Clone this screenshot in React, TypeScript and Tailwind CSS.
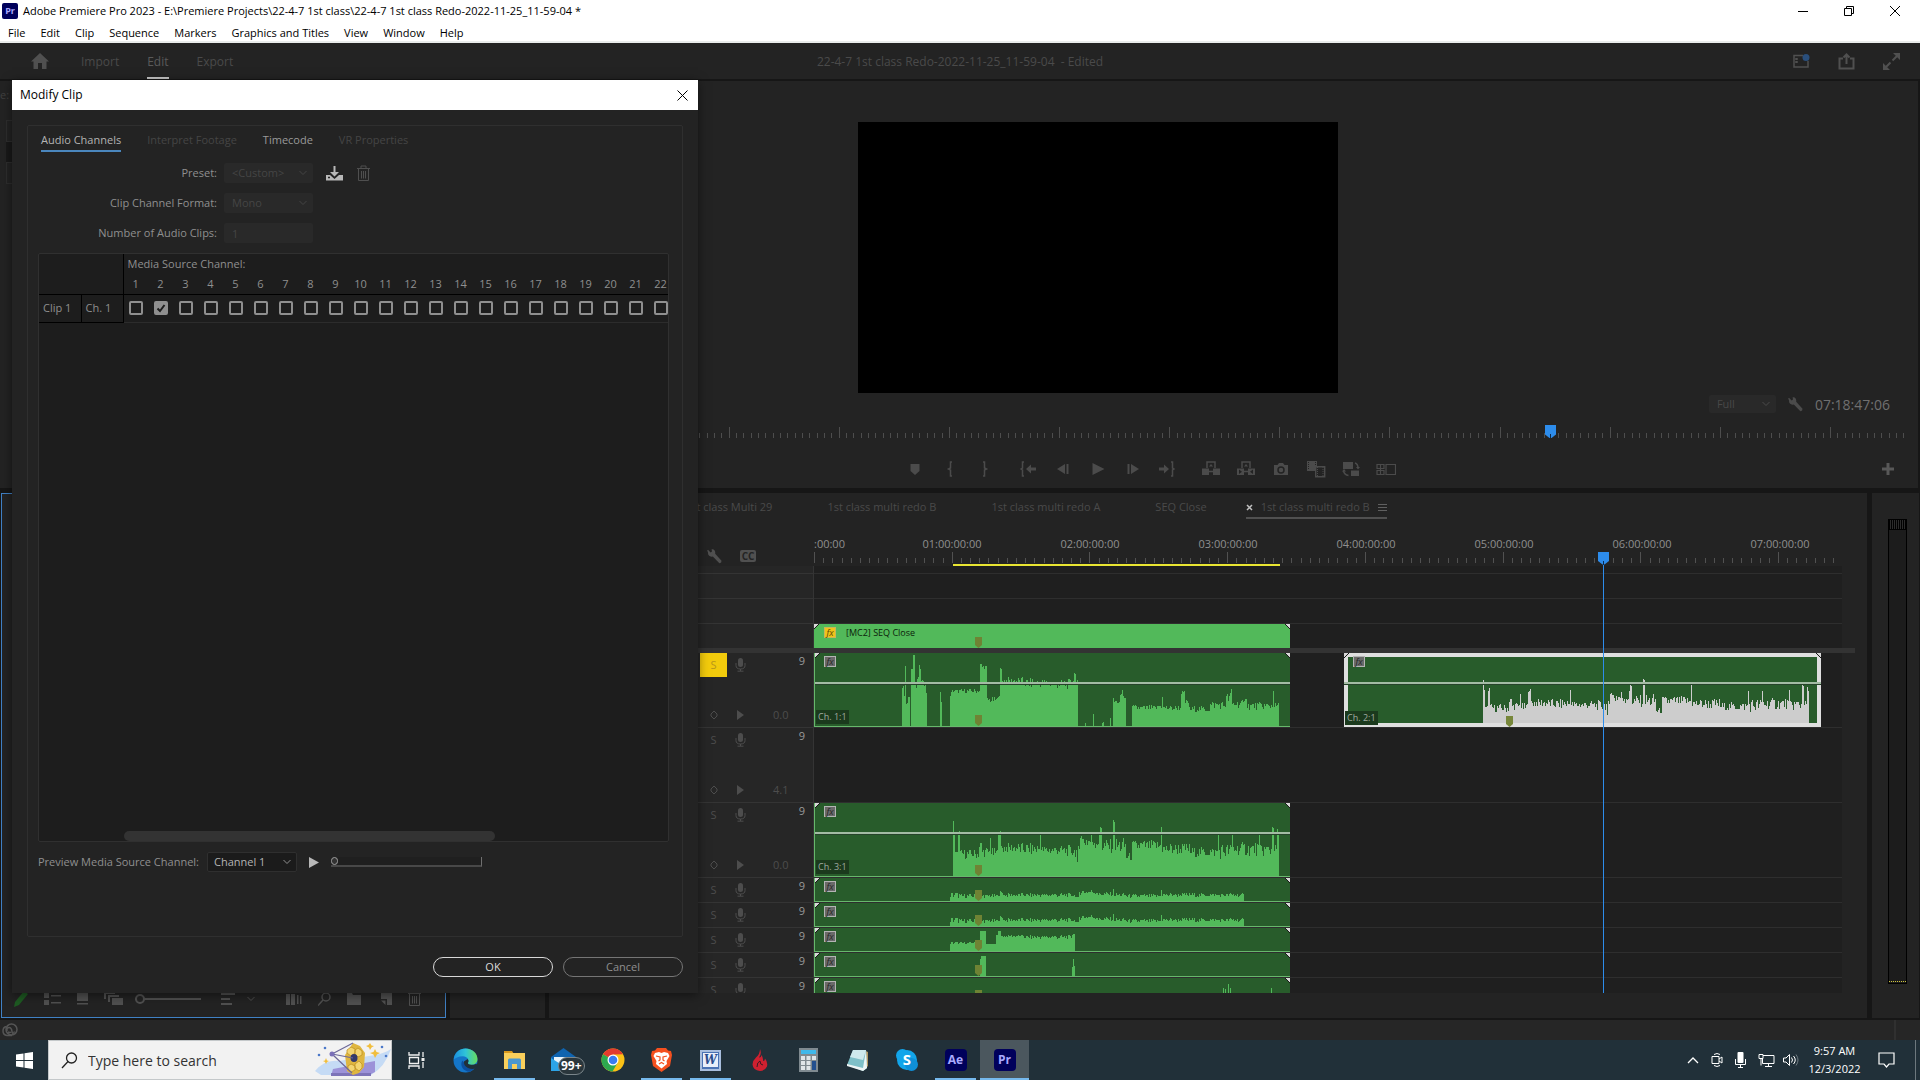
import { ReactNode, useState } from 'react';
import { clsx } from 'clsx';

const menus = ['File', 'Edit', 'Clip', 'Sequence', 'Markers', 'Graphics and Titles', 'View', 'Window', 'Help'];
const channels = Array.from({ length: 22 }, (_, i) => i + 1);

// [from, to, height, jitter], in pixels from the clip's left edge
type Segment = [number, number, number, number];

const cameraWave: Segment[] = [
    [88, 90, 38, 2], [90, 91, 30, 0], [91, 92, 60, 0], [92, 94, 22, 3], [94, 96, 28, 2],
    [97, 99, 57, 0], [99, 101, 71, 1], [101, 103, 41, 3], [103, 105, 49, 3], [105, 107, 58, 4],
    [107, 109, 44, 4], [109, 112, 42, 3], [112, 113, 33, 0], [126, 127, 34, 0], [127, 128, 24, 0],
    [136, 138, 32, 3], [138, 166, 35, 2], [166, 168, 61, 3], [168, 173, 59, 2], [173, 184, 26, 3],
    [184, 186, 33, 4], [186, 188, 56, 2], [188, 210, 45, 4], [210, 238, 43, 5], [238, 258, 42, 5],
    [258, 260, 46, 3], [260, 262, 53, 1], [262, 264, 44, 2], [271, 272, 3, 0], [279, 280, 12, 0],
    [288, 290, 4, 1], [296, 297, 8, 0], [299, 302, 26, 3], [302, 306, 23, 3], [306, 309, 34, 5],
    [309, 312, 28, 2], [318, 344, 18, 3], [344, 348, 20, 3], [348, 349, 29, 0], [349, 367, 18, 3],
    [367, 371, 33, 2], [371, 375, 24, 3], [375, 396, 17, 3], [396, 412, 21, 4], [412, 413, 30, 0],
    [413, 417, 28, 6], [417, 418, 37, 0], [418, 431, 22, 4], [431, 433, 29, 2], [433, 459, 20, 4],
    [459, 460, 35, 0], [460, 465, 20, 3],
];

const voiceWave: Segment[] = [
    [139, 140, 55, 0], [140, 141, 43, 0], [141, 144, 22, 3], [144, 146, 44, 3], [146, 165, 22, 5],
    [165, 168, 30, 6], [168, 176, 24, 5], [176, 177, 38, 0], [177, 184, 23, 5], [184, 187, 43, 2],
    [187, 205, 28, 5], [205, 226, 27, 6], [226, 227, 43, 0], [227, 250, 26, 5], [250, 263, 25, 6],
    [263, 264, 12, 2], [264, 266, 27, 4], [266, 268, 42, 4], [268, 286, 35, 9], [286, 288, 49, 3], [288, 299, 30, 7],
    [299, 301, 55, 1], [301, 312, 30, 9], [312, 318, 19, 4], [318, 347, 30, 6], [347, 348, 49, 0],
    [348, 376, 27, 6], [376, 404, 24, 5], [404, 405, 42, 0], [405, 418, 25, 8], [418, 419, 42, 0],
    [419, 445, 27, 7], [445, 446, 43, 0], [446, 458, 26, 7], [458, 460, 49, 2], [460, 463, 27, 4],
    [463, 464, 47, 0], [464, 465, 42, 0],
];

const roomWave: Segment[] = [
    [136, 146, 6, 3], [146, 184, 5, 2], [184, 190, 8, 3], [190, 262, 6, 2], [262, 265, 4, 0],
    [265, 284, 9, 3], [284, 299, 7, 2], [299, 300, 12, 0], [300, 312, 6, 2], [312, 347, 5, 2],
    [347, 348, 11, 0], [348, 430, 6, 2],
];

const mixWave: Segment[] = [
    [136, 166, 8, 1], [166, 168, 20, 1], [168, 172, 20, 0], [172, 182, 7, 0], [182, 184, 16, 0],
    [184, 187, 20, 0], [187, 210, 15, 1], [210, 258, 14, 2], [258, 261, 17, 1],
];

const stingWave: Segment[] = [[166, 167, 17, 0], [167, 172, 20, 0], [258, 259, 9, 0], [259, 260, 17, 0], [260, 261, 10, 0]];
const tailWave: Segment[] = [[409, 410, 13, 0], [411, 412, 12, 0], [414, 415, 17, 0], [416, 417, 13, 0], [457, 458, 13, 0]];

function wavePath(segments: Segment[], height: number, scale = 1) {
    let d = '';
    segments.forEach(([from, to, level, jitter]) => {
        for (let x = from; x < to; x++) {
            const n = Math.sin(x * 12.9898) * 43758.5453;
            const r = n - Math.floor(n);
            const h = Math.max(1, Math.round((level + (r - 0.5) * jitter * 2) * scale));
            d += `M${x} ${height}v-${h}h1v${h}z`;
        }
    });
    return d;
}

function tickPath(start: number, step: number, count: number, bottom: number, major: number) {
    let d = '';
    for (let i = 0; i < count; i++) {
        const x = Math.round(start + i * step) + 0.5;
        d += `M${x} ${bottom}v-${(i - major) % 15 === 0 ? 11 : 5}`;
    }
    return d;
}

function Chevron({ className }: { className?: string }) {
    return (
        <svg className={clsx('pointer-events-none', className)} width="8" height="6" viewBox="0 0 8 6" fill="none" stroke="currentColor">
            <path d="M0.5 1L4 4.5L7.5 1" />
        </svg>
    );
}

function Wrench() {
    return (
        <svg width="15" height="15" viewBox="0 0 15 15" fill="currentColor">
            <path d="M1 0.8L3.6 3.4L5 2.5L4.6 0.3C7 0 8.8 2 8.2 4.8L14.5 11.8Q14.8 14.3 12.4 14.2L5.8 7.4C3.4 8.3 0.6 6.6 1 3.6L0.2 1.6Z" />
        </svg>
    );
}

function Mic() {
    return (
        <svg width="11" height="14" viewBox="0 0 11 14" fill="currentColor">
            <rect x="3" y="0" width="5" height="9" rx="2.5" />
            <path d="M1 5v2.5Q1 11 5.5 11T10 7.5V5M5.5 11v2M2.5 13.2h6" fill="none" stroke="currentColor" />
        </svg>
    );
}

function Trash() {
    return (
        <svg width="13" height="17" viewBox="0 0 13 17" fill="none" stroke="currentColor">
            <path d="M0 3.5h13M4 3V1h5v2M1.5 3.5v12h10v-12M4.5 6v7.5M6.5 6v7.5M8.5 6v7.5" />
        </svg>
    );
}

function TitleBar() {
    return (
        <header className="bg-white text-black text-[11px] border-b-2 border-[#e9eceb]">
            <div className="flex h-[22px] items-center pl-0.5">
                <span className="flex h-4 w-4 items-center justify-center rounded-xs bg-[#00005b] text-[9px] font-bold text-[#a9a9ff]">Pr</span>
                <h1 className="ml-[5px] flex-1 whitespace-nowrap">
                    Adobe Premiere Pro 2023 - E:\Premiere Projects\22-4-7 1st class\22-4-7 1st class Redo-2022-11-25_11-59-04 *
                </h1>
                <div className="flex items-center gap-9 pr-5">
                    <button aria-label="Minimize"><svg width="10" height="10" stroke="black"><path d="M0 5.5h10" /></svg></button>
                    <button aria-label="Restore"><svg width="10" height="10" stroke="black" fill="none"><path d="M0.5 2.5h7v7h-7zM2.5 2.5v-2h7v7h-2" /></svg></button>
                    <button aria-label="Close"><svg width="10" height="10" stroke="black"><path d="M0 0L10 10M10 0L0 10" /></svg></button>
                </div>
            </div>
            <nav className="flex h-[19px] items-start gap-[15px] pl-2 leading-[21px]">
                {menus.map(m => <button key={m} className="whitespace-nowrap">{m}</button>)}
            </nav>
        </header>
    );
}

function WorkspaceBar() {
    return (
        <div className="flex h-9 shrink-0 items-center bg-[#232323] text-[12px] text-[#4a4a4a]">
            <div className="flex h-full flex-1 items-center gap-7">
                <button aria-label="Home" className="ml-[31px] mr-1">
                    <svg width="18" height="16" viewBox="0 0 18 16" fill="#505050"><path d="M9 0L18 8.5H15.5V16H11V10H7V16H2.5V8.5H0Z" /></svg>
                </button>
                <button className="h-full pt-0.5">Import</button>
                <button className="h-full border-b-2 border-[#c8c8c8] pt-1 text-[#5a5a5a]">Edit</button>
                <button className="h-full pt-0.5">Export</button>
            </div>
            <p className="pt-0.5">22-4-7 1st class Redo-2022-11-25_11-59-04&nbsp; - Edited</p>
            <div className="flex flex-1 items-center justify-end gap-7 text-[#505050]">
                <button aria-label="Workspaces">
                    <svg width="17" height="14" fill="none" stroke="currentColor" strokeWidth="1.5"><path d="M10 1.5H1v11.500h14V7" /><path d="M3.500 4v6" strokeWidth="2.500" strokeDasharray="2 1" /><circle cx="13" cy="3.500" r="3.500" fill="#2a4f7c" stroke="none" /></svg>
                </button>
                <button aria-label="Quick export">
                    <svg width="17" height="17" fill="none" stroke="currentColor" strokeWidth="2"><path d="M5 5.500H1.500v10h14v-10H12M8.500 11V2M5.500 4.500L8.500 1.500L11.500 4.500" /></svg>
                </button>
                <button aria-label="Full screen" className="mr-5">
                    <svg width="17" height="17" fill="currentColor"><path d="M17 0v7L10 0zM0 17v-7l7 7z" /><path d="M14 3L9.500 7.500M7.500 9.500L3 14" stroke="currentColor" strokeWidth="2" /></svg>
                </button>
            </div>
        </div>
    );
}

function Cell({ label, children }: { label: string; children: ReactNode }) {
    return (
        <button aria-label={label} className="flex w-[35px] justify-center">
            <svg width="20" height="18" viewBox="0 0 20 18" fill="currentColor">{children}</svg>
        </button>
    );
}

function Transport() {
    return (
        <div className="flex h-9 items-center text-[#4b4b4b]">
            <div className="flex flex-1 justify-end">
                <Cell label="Add marker"><path d="M5.500 4h9v7l-4.500 4-4.500-4z" /></Cell>
                <Cell label="Mark in"><path d="M12 2h-1.500v6L8.500 9l2 1v6H12" fill="none" stroke="currentColor" strokeWidth="1.500" /></Cell>
                <Cell label="Mark out"><path d="M8 2h1.500v6l2 1-2 1v6H8" fill="none" stroke="currentColor" strokeWidth="1.500" /></Cell>
                <span className="w-2" />
                <Cell label="Go to in"><path d="M6 2H4.500v6L3 9l1.500 1v6H6" fill="none" stroke="currentColor" strokeWidth="1.500" /><path d="M8 9l5-4.500v3h5v3h-5v3z" /></Cell>
                <Cell label="Step back"><path d="M4 9l8-5v10zM13.500 4h2v10h-2z" /></Cell>
            </div>
            <Cell label="Play"><path d="M4.500 3l12 6-12 6z" /></Cell>
            <div className="flex flex-1">
                <Cell label="Step forward"><path d="M16 9L8 4v10zM4.500 4h2v10h-2z" /></Cell>
                <Cell label="Go to out"><path d="M13 2h1.500v6L16 9l-1.500 1v6H13" fill="none" stroke="currentColor" strokeWidth="1.500" /><path d="M11 9L6 4.500v3H1v3h5v3z" /></Cell>
                <span className="w-2" />
                <Cell label="Lift"><path d="M1 8.500h7V15H1zM12 8.500h7V15h-7zM8 6.500l2-2.500 2 2.500z" /><path d="M6 8V2h8v6M7 11.500h6" fill="none" stroke="currentColor" strokeWidth="1.500" /></Cell>
                <Cell label="Extract"><path d="M1 8.500h7V15H1zM12 8.500h7V15h-7zM8 6.500l2-2.500 2 2.500z" /><path d="M6 8V2h8v6M7 11.500h6" fill="none" stroke="currentColor" strokeWidth="1.500" /><path d="M3 9.500l3 2.300-3 2.200zM17 9.500l-3 2.300 3 2.200z" fill="#232323" /></Cell>
                <Cell label="Export frame"><path d="M3 5h3.500l1.500-2h4l1.500 2H17v10H3z" /><circle cx="10" cy="10" r="3" fill="none" stroke="#232323" strokeWidth="1.500" /></Cell>
                <Cell label="Multi-camera"><path d="M1 1h10v10H1z" /><path d="M2.500 2v8M9.500 2v8" stroke="#232323" strokeDasharray="1 1" /><path d="M9.700 6.700h9v10h-9z" fill="#232323" stroke="currentColor" strokeWidth="1.400" /><path d="M11.500 7v10M17 7v10" stroke="currentColor" strokeDasharray="1 1" /></Cell>
                <Cell label="Toggle proxies"><path d="M2 2h10v7H2zM10 10.500h8V16h-8z" /><path d="M14 3q3 1 3 5M2.500 11q1 4 5 4.500" fill="none" stroke="currentColor" strokeWidth="1.500" /><path d="M15 7h4l-2 2.500zM1 11.500h4L3 9z" /></Cell>
                <Cell label="Comparison view"><path d="M1 4.500h7v4H1zM1 10.500h7v4H1zM4.500 4.500v10M10 4.500h9.500v10H10z" fill="none" stroke="currentColor" strokeWidth="1.200" /></Cell>
                <button aria-label="Button editor" className="ml-auto mr-6">
                    <svg width="12" height="12" fill="#585858"><path d="M4.500 0h3v4.500H12v3H7.500V12h-3V7.500H0v-3h4.500z" /></svg>
                </button>
            </div>
        </div>
    );
}

function ProgramMonitor() {
    return (
        <section className="flex min-w-0 flex-1 flex-col bg-[#232323]">
            <div className="mx-auto mt-[41px] h-[271px] w-[480px] bg-black" />
            <div className="mt-0.5 flex h-[18px] items-center justify-end pr-7 text-[#4b4b4b]">
                <div className="relative flex">
                    <select disabled aria-label="Playback resolution" className="h-[18px] w-[67px] appearance-none rounded-xs bg-[#292929] pl-2 text-[11px] text-[#484848] opacity-100">
                        <option>Full</option>
                    </select>
                    <Chevron className="absolute right-1.5 top-1.5" />
                </div>
                <button aria-label="Settings" className="ml-3"><Wrench /></button>
                <span className="ml-3 text-[14px] text-[#707070]">07:18:47:06</span>
            </div>
            <div className="relative mt-3 h-[14px]">
                <svg className="w-full" height="14" stroke="#4d4d4d" shapeRendering="crispEdges">
                    <path d={tickPath(11, 7.343, 221, 13, 0)} />
                </svg>
                <svg className="absolute left-[1268px] top-0" width="11" height="13"><path d="M0 0h11v9.500L6.500 13h-2L0 9.500z" fill="#2d8ceb" /><path d="M5.500 9v4" stroke="#0a2a4d" /></svg>
            </div>
            <div className="mt-3"><Transport /></div>
        </section>
    );
}

function Marker({ className, fill = '#6f8334' }: { className: string; fill?: string }) {
    return (
        <svg className={clsx('absolute', className)} width="7" height="11"><path d="M0 0h7v8L3.500 11L0 8z" fill={fill} /></svg>
    );
}

function Badge({ on }: { on?: boolean }) {
    return (
        <span className={clsx(
            'absolute top-[3px] flex h-[11px] w-3 items-center justify-center border text-[9px] leading-none italic',
            on ? 'left-2.5 border-[#c9b558] bg-[#f0c419] text-[#5c4a05]' : 'left-[9px] border-[#b4b4b4] bg-[#6a6a6a] text-[#262626]',
        )}>fx</span>
    );
}

function Clip({ wave, tall, selected, channel, marker = 'left-[160px]', scale = 1 }: {
    wave: Segment[]; tall?: boolean; selected?: boolean; channel?: string; marker?: string; scale?: number;
}) {
    const height = tall ? 74 : 24;
    return (
        <div className={clsx('relative h-full shrink-0 overflow-hidden bg-[#285c2b]', selected ? 'w-[477px]' : 'w-[476px] border-b border-l border-[#67b86c]')}>
            <svg className={clsx('absolute bottom-0', selected ? 'left-0' : '-left-px')} width="477" height={height} shapeRendering="crispEdges">
                <path d={wavePath(wave, height, scale)} fill={selected ? '#cdcdcd' : '#52b95a'} />
            </svg>
            {selected && <div className="absolute inset-0 border-4 border-[#dfdfdf]" />}
            {tall && <div className="absolute inset-x-0 top-[29px] h-[3px] border-b border-[#26432a] bg-[#a3bba4]" />}
            <svg className="absolute left-0 top-0" width="5" height="5"><path d="M0 0h5L0 5z" fill="#d8d8d8" /><path d="M5 0L0 5" stroke="#1a1a1a" /></svg>
            <svg className="absolute right-0 top-0" width="5" height="5"><path d="M0 0h5v5z" fill="#d8d8d8" /><path d="M0 0L5 5" stroke="#1a1a1a" /></svg>
            <Badge />
            {channel && <span className="absolute bottom-[2px] left-px bg-[#1b3a1d] px-0.5 text-[9px] leading-[14px] text-[#a0aaa0]">{channel}</span>}
            <Marker className={clsx('bottom-0', marker)} fill={selected ? '#77873a' : '#6f8334'} />
        </div>
    );
}

function AudioTrack({ solo, level, children }: { solo?: boolean; level?: string; children?: ReactNode }) {
    return (
        <div className={clsx('flex shrink-0', level ? 'h-[75px]' : 'h-[25px]')}>
            <div className="flex w-[265px] flex-col justify-between border-b border-r border-[#343434] bg-[#262626] pl-[151px] text-[11px] text-[#4d4d4d]">
                <div className="flex h-6 items-center">
                    <button aria-label="Solo" className={clsx('h-full w-[27px]', solo && 'bg-[#f2cb0c] text-[#b8961a]')}>S</button>
                    <button aria-label="Voice-over record" className="flex w-[26px] justify-center"><Mic /></button>
                    <span className="ml-auto mr-2 self-start leading-4 text-[#9a9a9a]">9</span>
                </div>
                {level && (
                    <div className="flex h-6 items-center">
                        <button aria-label="Add keyframe" className="flex w-[27px] justify-center">
                            <svg width="8" height="10" fill="none" stroke="currentColor"><path d="M4 1L7 4v2L4 9L1 6v-2z" /></svg>
                        </button>
                        <button aria-label="Next keyframe" className="flex w-[26px] justify-center">
                            <svg width="7" height="10" fill="currentColor"><path d="M0 0L7 5L0 10z" /></svg>
                        </button>
                        <span className="ml-5">{level}</span>
                    </div>
                )}
            </div>
            <div className="mr-[25px] flex min-w-0 flex-1 border-b border-[#2e2e2e] bg-[#1f1f1f]">{children}</div>
        </div>
    );
}

const sequenceTabs = ['1st class Multi 29', '1st class multi redo B', '1st class multi redo A', 'SEQ Close'];

function Timeline() {
    return (
        <section className="relative flex min-w-0 flex-1 flex-col overflow-hidden bg-[#232323]">
            <div className="flex h-[26px] gap-[55px] whitespace-nowrap pl-[136px] text-[11px] leading-7 text-[#4a4a4a]">
                {sequenceTabs.map(t => <button key={t}>{t}</button>)}
                <button className="-ml-4 flex items-center gap-2 border-b-2 border-[#505050] pt-1">
                    <svg width="7" height="7" stroke="#c0c0c0" strokeWidth="1.500"><path d="M1 1L6 6M6 1L1 6" /></svg>
                    1st class multi redo B
                    <svg width="9" height="9" stroke="#606060"><path d="M0 1.500h9M0 4.500h9M0 7.500h9" /></svg>
                </button>
            </div>
            <div className="flex h-[47px] shrink-0">
                <div className="flex w-[265px] shrink-0 items-end gap-[18px] pb-0.5 pl-[158px] text-[#505050]">
                    <button aria-label="Timeline settings"><Wrench /></button>
                    <button aria-label="Captions" className="mb-0.5 flex h-3 w-4 items-center justify-center rounded-xs bg-[#505050] text-[10px] font-bold text-[#232323]">CC</button>
                </div>
                <div className="relative mr-[25px] min-w-0 flex-1 text-[11px] text-[#8f8f8f]">
                    <div className="flex pt-[17px] leading-4">
                        <span className="w-[69px] shrink-0">:00:00</span>
                        {[1, 2, 3, 4, 5, 6, 7].map(h => (
                            <span key={h} className="w-[138px] shrink-0 text-center">0{h}:00:00:00</span>
                        ))}
                    </div>
                    <svg className="absolute bottom-[3px] left-0 w-full" height="12" stroke="#515151" shapeRendering="crispEdges">
                        <path d={tickPath(0, 9.182, 113, 12, 0)} />
                    </svg>
                    <div className="absolute bottom-0 left-[139px] h-0.5 w-[327px] bg-[#e8e532]" />
                </div>
            </div>
            <div className="flex h-[427px] shrink-0 flex-col overflow-hidden">
                {['h-2', 'h-[25px]', 'h-[25px]'].map((h, i) => (
                    <div key={i} className={clsx('flex shrink-0', h)}>
                        <div className="w-[265px] border-b border-r border-[#343434] bg-[#262626]" />
                        <div className="mr-[25px] flex-1 border-b border-[#2e2e2e] bg-[#1f1f1f]" />
                    </div>
                ))}
                <div className="flex h-6 shrink-0">
                    <div className="w-[265px] border-r border-[#343434] bg-[#262626]" />
                    <div className="mr-[25px] flex flex-1 bg-[#1f1f1f]">
                        <div className="relative w-[476px] bg-[#52b95a]">
                            <svg className="absolute left-0 top-0" width="5" height="5"><path d="M0 0h5L0 5z" fill="#d8d8d8" /><path d="M5 0L0 5" stroke="#1a1a1a" /></svg>
                            <svg className="absolute right-0 top-0" width="5" height="5"><path d="M0 0h5v5z" fill="#d8d8d8" /><path d="M0 0L5 5" stroke="#1a1a1a" /></svg>
                            <Badge on />
                            <span className="block pl-8 text-[9px] leading-[18px] text-[#0c1c0a]">[MC2] SEQ Close</span>
                            <Marker className="bottom-0 left-[161px]" />
                        </div>
                    </div>
                </div>
                <div className="mr-3 h-[5px] shrink-0 bg-[#333333]" />
                <AudioTrack solo level="0.0">
                    <Clip wave={cameraWave} tall channel="Ch. 1:1" />
                    <div className="w-[54px] shrink-0" />
                    <Clip wave={voiceWave} tall selected channel="Ch. 2:1" marker="left-[162px]" scale={0.86} />
                </AudioTrack>
                <AudioTrack level="4.1" />
                <AudioTrack level="0.0"><Clip wave={voiceWave} tall channel="Ch. 3:1" /></AudioTrack>
                <AudioTrack><Clip wave={roomWave} /></AudioTrack>
                <AudioTrack><Clip wave={roomWave} /></AudioTrack>
                <AudioTrack><Clip wave={mixWave} /></AudioTrack>
                <AudioTrack><Clip wave={stingWave} /></AudioTrack>
                <AudioTrack><Clip wave={tailWave} /></AudioTrack>
            </div>
            {/* playhead */}
            <div className="absolute left-[1054px] top-[59px] h-[441px] w-px bg-[#2d8ceb]" />
            <svg className="absolute left-[1049px] top-[59px]" width="11" height="13"><path d="M0 0h11v9L6.500 12.500h-2L0 9z" fill="#2d8ceb" /><path d="M5.500 9v4" stroke="#0a2a4d" /></svg>
        </section>
    );
}

function ProjectPanel() {
    return (
        <section className="ml-px flex w-[445px] shrink-0 flex-col justify-end border border-[#4081c5] bg-[#232323]">
            <div className="flex h-[37px] items-center px-3 text-[#505050]">
                <svg width="14" height="16" fill="#1e5a22"><path d="M0 16l1-5L10 0l4 3L5 14z" /></svg>
                <svg className="ml-4" width="17" height="12" fill="currentColor"><path d="M0 0h5v5H0zM0 7h5v5H0zM7 2h10v1.500H7zM7 9h10v1.500H7z" /></svg>
                <svg className="ml-4" width="11" height="13" fill="currentColor"><path d="M0 0h11v9H0zM0 11h11v1.500H0z" /></svg>
                <svg className="ml-4" width="19" height="13" fill="currentColor"><path d="M0 0h11v2H2v5H0zM4 3h11v2H6v5H4zM8 6h11v7H8z" /></svg>
                <input aria-label="Thumbnail size" type="range" min="0" max="100" defaultValue="0" className="ml-3 h-0.5 w-[66px] appearance-none bg-[#505050] [&::-webkit-slider-thumb]:h-2.5 [&::-webkit-slider-thumb]:w-2.5 [&::-webkit-slider-thumb]:appearance-none [&::-webkit-slider-thumb]:rounded-full [&::-webkit-slider-thumb]:border-2 [&::-webkit-slider-thumb]:border-[#505050] [&::-webkit-slider-thumb]:bg-[#232323]" />
                <svg className="ml-5" width="14" height="14" fill="currentColor"><path d="M0 1h14v2H0zM0 6h9v2H0zM0 11h11v2H0z" /></svg>
                <Chevron className="ml-3" />
                <svg className="ml-auto" width="16" height="12" fill="currentColor"><path d="M0 1h4v11H0zM5 1h4v11H5zM11 2h1.500v9H11zM14 3h1.500v8H14z" /></svg>
                <svg className="ml-4" width="13" height="14" fill="none" stroke="currentColor" strokeWidth="1.500"><circle cx="8" cy="5" r="4" /><path d="M5 8L0 13.500" /></svg>
                <svg className="ml-4" width="14" height="12" fill="currentColor"><path d="M0 0h5l1 2h8v10H0z" /></svg>
                <svg className="ml-5" width="11" height="12" fill="currentColor"><path d="M0 0h11v12H6V6H0zM0 7.500h4.500V12z" /></svg>
                <span className="ml-4 mr-3"><Trash /></span>
            </div>
        </section>
    );
}

function AudioMeter() {
    return (
        <section className="flex w-[47px] shrink-0 flex-col bg-[#232323] pl-4 pt-[26px]">
            <div className="flex h-[465px] w-[19px] flex-col border border-black bg-[#1c1c1c]">
                <div className="h-2.5 border-b border-black bg-[repeating-linear-gradient(90deg,#000_0_1px,#2b2b2b_1px_2px)]" />
                <div className="mb-px mt-auto h-px bg-[repeating-linear-gradient(90deg,#cfc43a_0_1px,#222_1px_2px)]" />
            </div>
        </section>
    );
}

const fieldStyle = 'h-5 w-[89px] appearance-none rounded-xs bg-[#292929] pl-2 text-[11px] text-[#454545] opacity-100';

function ModifyClip() {
    const [checked, setChecked] = useState([2]);
    const toggle = (c: number) => setChecked(prev => prev.includes(c) ? prev.filter(n => n !== c) : [...prev, c]);

    return (
        <div role="dialog" aria-labelledby="modify-title" className="absolute bottom-[87px] left-3 top-20 flex w-[686px] flex-col bg-[#232323] text-[11px] text-[#8f8f8f] shadow-[0_2px_10px_rgba(0,0,0,0.5)]">
            <div className="flex h-[30px] shrink-0 items-center justify-between bg-white pl-2 pr-2.5 text-[12px] text-black">
                <h2 id="modify-title">Modify Clip</h2>
                <button aria-label="Close dialog"><svg width="11" height="11" stroke="black"><path d="M0.500 0.500L10.500 10.500M10.500 0.500L0.500 10.500" /></svg></button>
            </div>
            <div className="mx-[15px] mt-[15px] flex flex-1 flex-col rounded-xs border border-[#2f2f2f] px-2.5">
                <div role="tablist" className="flex h-[26px] gap-[26px] pl-[3px]">
                    <button role="tab" aria-selected="true" className="border-b-2 border-[#4a86bd] pt-1 text-[#b4b4b4]">Audio Channels</button>
                    <button role="tab" disabled className="pt-0.5 text-[#454545]">Interpret Footage</button>
                    <button role="tab" className="pt-0.5 text-[#9a9a9a]">Timecode</button>
                    <button role="tab" disabled className="pt-0.5 text-[#454545]">VR Properties</button>
                </div>
                <div className="mt-[11px] grid grid-cols-[179px_89px_auto] items-center gap-x-[7px] gap-y-2.5">
                    <label htmlFor="preset" className="text-right">Preset:</label>
                    <div className="relative flex">
                        <select id="preset" disabled className={fieldStyle}><option>&lt;Custom&gt;</option></select>
                        <Chevron className="absolute right-1.5 top-[7px] text-[#454545]" />
                    </div>
                    <div className="flex items-center gap-3.5 pl-1.5">
                        <button aria-label="Save preset">
                            <svg width="17" height="15" fill="#b8b8b8"><path d="M7.500 0h2v6H13l-4.500 4.500L4 6h3.500zM0 9h4l4.500 4L13 9h4v5.500H0z" /><path d="M2 11.500h2" stroke="#232323" strokeWidth="1.500" /></svg>
                        </button>
                        <button aria-label="Delete preset" disabled className="text-[#4f4f4f]"><Trash /></button>
                    </div>
                    <label htmlFor="format" className="text-right">Clip Channel Format:</label>
                    <div className="relative flex">
                        <select id="format" disabled className={fieldStyle}><option>Mono</option></select>
                        <Chevron className="absolute right-1.5 top-[7px] text-[#454545]" />
                    </div>
                    <span />
                    <label htmlFor="clips" className="text-right">Number of Audio Clips:</label>
                    <input id="clips" disabled defaultValue="1" className={fieldStyle} />
                </div>
                <div className="mt-2.5 flex h-[589px] w-[631px] flex-col overflow-hidden rounded-xs border border-[#303030] bg-[#1d1d1d]">
                    <table className="w-[634px] table-fixed border-collapse">
                        <colgroup>
                            <col className="w-[42px]" />
                            <col className="w-[42px]" />
                            {channels.map(c => <col key={c} className="w-[25px]" />)}
                        </colgroup>
                        <thead>
                            <tr className="h-5">
                                <td colSpan={2} rowSpan={2} className="border-b border-r border-black" />
                                <th colSpan={22} scope="colgroup" className="pl-1 text-left font-normal">Media Source Channel:</th>
                            </tr>
                            <tr className="h-5 border-b border-black">
                                {channels.map(c => <th key={c} scope="col" className="p-0 text-center font-normal">{c}</th>)}
                            </tr>
                        </thead>
                        <tbody>
                            <tr className="h-7 border-b border-[#2c2c2c]">
                                <td className="border-b border-r border-black p-0 pl-1">Clip 1</td>
                                <td className="border-b border-r border-black p-0 pl-1">Ch. 1</td>
                                {channels.map(c => (
                                    <td key={c} className="p-0">
                                        <div className="relative mx-auto h-3.5 w-3.5">
                                            <input
                                                type="checkbox"
                                                aria-label={`Channel ${c}`}
                                                checked={checked.includes(c)}
                                                onChange={() => toggle(c)}
                                                className="block h-3.5 w-3.5 appearance-none rounded-xs border-2 border-[#8f8f8f] checked:bg-[#8f8f8f]"
                                            />
                                            {checked.includes(c) && (
                                                <svg className="pointer-events-none absolute left-0 top-0" width="14" height="14" fill="none" stroke="#1d1d1d" strokeWidth="2"><path d="M3.500 7.500L6 10L10.500 4" /></svg>
                                            )}
                                        </div>
                                    </td>
                                ))}
                            </tr>
                        </tbody>
                    </table>
                    <div className="ml-[85px] mt-auto h-2.5 w-[371px] shrink-0 rounded-full bg-[#333333]" />
                </div>
                <div className="mt-2.5 flex h-5 items-center">
                    <label htmlFor="preview">Preview Media Source Channel:</label>
                    <div className="relative ml-2 flex">
                        <select id="preview" className="h-5 w-[90px] appearance-none rounded-xs border border-[#2f2f2f] bg-[#1b1b1b] pl-1.5 text-[11px] text-[#b4b4b4]"><option>Channel 1</option></select>
                        <Chevron className="absolute right-1.5 top-[7px]" />
                    </div>
                    <button aria-label="Play preview" className="ml-3"><svg width="10" height="11" fill="#b8b8b8"><path d="M0 0L10 5.500L0 11z" /></svg></button>
                    <input aria-label="Preview position" type="range" min="0" max="100" defaultValue="0" className="ml-3 h-2.5 w-[151px] appearance-none border-b-2 border-r border-b-[#484848] border-r-[#707070] bg-[#1f1f1f] [&::-webkit-slider-thumb]:h-2 [&::-webkit-slider-thumb]:w-[7px] [&::-webkit-slider-thumb]:appearance-none [&::-webkit-slider-thumb]:rounded-full [&::-webkit-slider-thumb]:border [&::-webkit-slider-thumb]:border-[#a0a0a0] [&::-webkit-slider-thumb]:bg-[#333]" />
                </div>
            </div>
            <div className="flex justify-end gap-2.5 px-[15px] pb-4 pt-5">
                <button className="h-5 w-[120px] rounded-full border border-[#d8d8d8] text-[#dcdcdc]">OK</button>
                <button className="h-5 w-[120px] rounded-full border border-[#757575]">Cancel</button>
            </div>
        </div>
    );
}

function Telescope() {
    return (
        <svg width="76" height="38" viewBox="0 0 76 38">
            <path d="M0 30Q10 18 24 20L60 14Q70 12 76 8Q70 26 56 34L6 34Z" fill="#c5dbf5" />
            <path d="M18 28L60 20V31L52 35H16Z" fill="#9c92d8" /><path d="M16 32h40v3H16z" fill="#7d74b8" />
            <path d="M38 2L45 5L50 12L49 26L44 32L38 34L32 30L30 14Z" fill="#dfb640" />
            <path d="M36 6l4 2v4l-4 3-4-3V9zM43 7l4 3v4l-4 2-3-3V9zM36 23l4 2v4l-4 2-3-2v-4zM44 20l3 3v4l-3 3-4-3v-4z" fill="#f3d570" stroke="#b98c1e" strokeWidth="0.700" />
            <ellipse cx="39" cy="17" rx="3.500" ry="4" fill="#343a6b" />
            <path d="M17 13L38 2M17 13L38 17M17 13L37 32" stroke="#6c6899" strokeWidth="1.200" fill="none" /><circle cx="17" cy="13" r="2.500" fill="#7a70b8" />
            <path d="M55 2l1.500 2.500L59 5l-2.500 1.500L55 9l-1-2.500L51 5l2.500-1zM60 8l1.500 3L65 12l-3 1.500L60 17l-1.500-3.500L55 12l3.500-1zM11 17l1 2.500 2 .5-2 1-1 2-1-2-2-1 2-.5z" fill="#f1be3c" />
            <circle cx="10" cy="7" r="1.300" fill="#4b78c9" /><circle cx="4" cy="14" r="1.300" fill="#4b78c9" /><circle cx="67" cy="6" r="1.300" fill="#4b78c9" /><circle cx="71" cy="15" r="1.300" fill="#4b78c9" />
        </svg>
    );
}

function AdobeTile({ children }: { children: string }) {
    return <span className="flex h-[22px] w-[22px] items-center justify-center rounded-sm bg-[#00005b] text-[12px] font-bold text-[#a9a9ff]">{children}</span>;
}

function Taskbar() {
    const apps: { name: string; running?: boolean; active?: boolean; icon: ReactNode }[] = [
        { name: 'Task View', icon: <svg width="18" height="18" fill="none" stroke="#f0f0f0" strokeWidth="1.300"><path d="M1 1v3h10V1M1.500 6.500h9v6h-9zM1 18v-3h10v3M15 1v5M15 11v6" /><path d="M13.500 7h3v3h-3z" fill="#f0f0f0" stroke="none" /></svg> },
        { name: 'Edge', icon: <svg width="25" height="25" viewBox="0 0 24 24"><defs><linearGradient id="edge" x1="0" x2="1"><stop offset="0" stopColor="#1a8fe0" /><stop offset="0.500" stopColor="#2fc4d8" /><stop offset="1" stopColor="#68dd5c" /></linearGradient></defs><circle cx="12" cy="12" r="11.500" fill="#1475c8" /><path d="M0.700 11C1.500 4 6.500 0.500 12 0.500C19 0.500 23.500 5.500 23.500 10.500C23.500 14 21 16.200 17.500 16.200C15 16.200 13.800 15.300 14.300 14.200C16 12 14 8 9.500 8C5 8 2 10 0.700 11Z" fill="url(#edge)" /><path d="M9 12C6 17 10 22.500 16 22.800C19 21.500 21.500 19 22.500 16.500C18 19 12 18.500 10.500 14Z" fill="#0c4f9e" /><path d="M14 10.500C15.500 12 14.800 13.500 14.300 14.200C14 16 18 17 22.500 15L23.500 17L21 20C14 21 10 17 10.500 13Z" fill="#213039" /></svg> },
        { name: 'File Explorer', running: true, icon: <svg width="23" height="20"><path d="M1 1h8l2 3H1z" fill="#d9981c" /><path d="M1 3h21v16H1z" fill="#f9cf5b" /><path d="M5 19v-9q0-1.500 1.500-1.500h10Q18 8.500 18 10v9h-4v-5h-5v5z" fill="#4a97d0" /></svg> },
        { name: 'Mail', icon: <span className="relative"><svg width="25" height="24"><path d="M0 9L12.500 0L25 9V23H0z" fill="#0f64b0" /><path d="M3 9h19v8H3z" fill="#e8f3fb" /><path d="M0 10l12.500 8L25 10v13H0z" fill="#2ca4e8" /></svg><span className="absolute left-[7px] top-[9px] rounded-full border border-[#7a858a] bg-[#2a363c] px-0.5 text-[12px] font-bold leading-4 text-white">99+</span></span> },
        { name: 'Chrome', icon: <svg width="24" height="24" viewBox="0 0 24 24"><circle cx="12" cy="12" r="11.500" fill="#fbc116" /><path d="M12 12L2 6.200A11.500 11.500 0 0 1 22 6.200L12 6.500Z" fill="#e33b2e" /><path d="M12 12L2 6.200A11.500 11.500 0 0 0 11.500 23.500L16.500 15Z" fill="#2da94f" /><circle cx="12" cy="12" r="5.500" fill="white" /><circle cx="12" cy="12" r="4.300" fill="#3a7cf0" /></svg> },
        { name: 'Brave', running: true, icon: <svg width="21" height="24"><path d="M6 0h9l2 2.500L20 3l1 4-2 11-8.500 6L2 18L0 7l1-4 3-.5z" fill="#f4501f" /><path d="M4 5l4-1 2.500 1L13 4l4 1 1.500 3-3 5 .5 3-5.500 4.500L5 16l.500-3L2.500 8z" fill="white" /><path d="M5 8l4 1v3L7.500 13M16 8l-4 1v3l1.500 1M8 16l2.500-1.500L13 16" fill="none" stroke="#f4501f" strokeWidth="1.200" /></svg> },
        { name: 'Word', running: true, icon: <span className="flex h-[21px] w-[21px] items-center justify-center border-2 border-[#a9bede] bg-[#4a72b4] font-serif"><span className="bg-[#e8eefa] px-px text-[14px] font-bold italic leading-[14px] text-[#2a4c8c]">W</span></span> },
        { name: 'Burner', icon: <svg width="16" height="22"><path d="M8 0Q10 5 7 8.500Q9 9 9.500 6Q11.500 9 11 12Q13 12 13 9.500Q16 13 15 17.500Q13 22 8 22Q1 21 0.500 15.500Q1 11 4 8.500Q8 5 8 0z" fill="#cf2030" /><path d="M5 18q0-5 3-6 0 4 3 4" stroke="#3d1a24" fill="none" /></svg> },
        { name: 'Calculator', icon: <svg width="19" height="24"><path d="M0 0h19v24H0z" fill="#7f8a90" /><path d="M2 2h15v4H2z" fill="#3fb8ea" /><path d="M2 8h4v4H2zM7.500 8h4v4h-4zM13 8h4v4h-4zM2 13h4v4H2zM7.500 13h4v4h-4zM2 18h4v4H2zM7.500 18h4v4h-4z" fill="#dfe5e8" /><path d="M13 13h4v9h-4z" fill="#23508f" /></svg> },
        { name: 'Notepad', icon: <svg width="23" height="22"><path d="M17 1l5 2v14l-4 4z" fill="#b79a63" /><path d="M7 1h13l1 18-4 3-16-6z" fill="#7fc0c8" /><path d="M7 1h13l-3 10L4 8z" fill="#cfe9ec" /><path d="M1 15l16 4 3-18 1 18-4 3-16-5z" fill="#eef5f5" /></svg> },
        { name: 'Skype', icon: <svg width="22" height="22"><circle cx="11" cy="11" r="10" fill="#12a5ea" /><circle cx="6.500" cy="6.500" r="6.500" fill="#12a5ea" /><circle cx="15.500" cy="15.500" r="6.500" fill="#0f8fd8" /><text x="11" y="16" textAnchor="middle" fontSize="15" fontWeight="bold" fill="white">S</text></svg> },
        { name: 'After Effects', running: true, icon: <AdobeTile>Ae</AdobeTile> },
        { name: 'Premiere Pro', active: true, icon: <AdobeTile>Pr</AdobeTile> },
    ];

    return (
        <footer className="flex h-10 shrink-0 items-stretch bg-[#213039] text-white">
            <button aria-label="Start" className="flex w-12 items-center justify-center">
                <svg width="17" height="17" fill="white"><path d="M0 2.500L7.500 1.500V8H0zM8.500 1.300L17 0V8H8.500zM0 9h7.500v6.500L0 14.500zM8.500 9H17v8l-8.500-1.200z" /></svg>
            </button>
            <label className="flex w-[344px] items-center border border-[#c4c8ca] bg-[#f2f2f2] pl-3">
                <svg width="17" height="17" fill="none" stroke="#222" strokeWidth="1.300"><circle cx="10.500" cy="6" r="5" /><path d="M7 9.500L1 16" /></svg>
                <input aria-label="Search" placeholder="Type here to search" className="ml-2.5 min-w-0 flex-1 bg-transparent text-[14px] outline-none placeholder:text-[#333]" />
                <Telescope />
            </label>
            {apps.map(a => (
                <button key={a.name} aria-label={a.name} className={clsx('relative flex w-[49px] items-center justify-center', a.active && 'bg-[#4b575e]')}>
                    {a.icon}
                    {(a.running || a.active) && <span className={clsx('absolute bottom-0 h-0.5 bg-[#76b9ed]', a.active ? 'inset-x-0' : 'inset-x-1')} />}
                </button>
            ))}
            <div className="ml-auto flex items-center">
                <svg width="12" height="7" fill="none" stroke="white" strokeWidth="1.300"><path d="M1 6l5-5 5 5" /></svg>
                <svg className="ml-3" width="12" height="16" fill="none" stroke="white"><path d="M1 4.500h7v7H1zM8 7l3-2v6L8 9M3 2.500q3-2 6 0M3 13.500q3 2 6 0" /></svg>
                <svg className="ml-3" width="11" height="16" fill="white"><rect x="2.500" y="0" width="6" height="11" rx="1" /><path d="M0.500 7v5.500h10V7M5.500 12.500v3M3 15.500h5" fill="none" stroke="white" /></svg>
                <svg className="ml-3" width="17" height="14" fill="none" stroke="white"><path d="M5 2.500h11v8H4.500V6M7 13.500h7M10.500 10.500v3M1 1.500h4v4H1zM3 5.500v7" /></svg>
                <svg className="ml-2" width="16" height="14" fill="none" stroke="white"><path d="M0.500 5h2.500l3.500-3.500v11L3 9H.5zM8.500 4.500q2 2.500 0 5M10.500 3q3.500 4 0 8" /><path d="M13 1.500q4 5.500 0 11" stroke="#6f7b82" /></svg>
                <div className="w-[71px] text-center text-[11px] leading-[18px]">
                    <p>9:57 AM</p>
                    <p>12/3/2022</p>
                </div>
                <svg className="ml-2" width="17" height="16" fill="none" stroke="white" strokeWidth="1.200"><path d="M1 1h15v11h-5l-2.500 3L6 12H1z" /></svg>
                <span className="ml-5 mr-1 h-10 w-px bg-[#6d787e]" />
            </div>
        </footer>
    );
}

export default function App() {
    return (
        <div className="relative flex min-h-screen flex-col overflow-hidden bg-[#161616] font-['Open_Sans','Noto_Sans',sans-serif]">
            <TitleBar />
            <WorkspaceBar />
            <div className="mt-0.5 flex flex-1">
                <section className="w-[274px] shrink-0 bg-[#232323] text-[11px] text-[#404040]">
                    <div className="pt-1.5">e:</div>
                    <div className="ml-1.5 mt-4 h-[22px] w-4 border border-[#2e2e2e]" />
                    <div className="ml-1.5 h-5 w-4 bg-[#191919]" />
                    <div className="ml-1.5 h-[22px] w-4 border border-[#2e2e2e]" />
                </section>
                <span className="w-[3px]" />
                <ProgramMonitor />
                <span className="w-0.5" />
            </div>
            <div className="mt-[5px] flex h-[525px] shrink-0">
                <ProjectPanel />
                <section className="ml-1 w-[95px] shrink-0 bg-[#232323]" />
                <span className="w-1 shrink-0" />
                <Timeline />
                <span className="w-[5px] shrink-0" />
                <AudioMeter />
                <span className="w-px shrink-0" />
            </div>
            <div className="mt-0.5 flex h-5 shrink-0 items-center bg-[#262626] pl-0.5">
                <svg width="16" height="14" viewBox="0 0 16 14" fill="none" stroke="#555" strokeWidth="1.500"><circle cx="9.500" cy="6.500" r="5.500" /><path d="M4.500 3.500Q1 4 1 8t4 4.500h5M5 8q-.5-3.500 2-3.500t3 4 2.500 0M6 9q2 1 3 0" /></svg>
                <span className="ml-auto mr-6 h-5 w-0.5 bg-[#303030]" />
            </div>
            <Taskbar />
            <ModifyClip />
        </div>
    );
}
